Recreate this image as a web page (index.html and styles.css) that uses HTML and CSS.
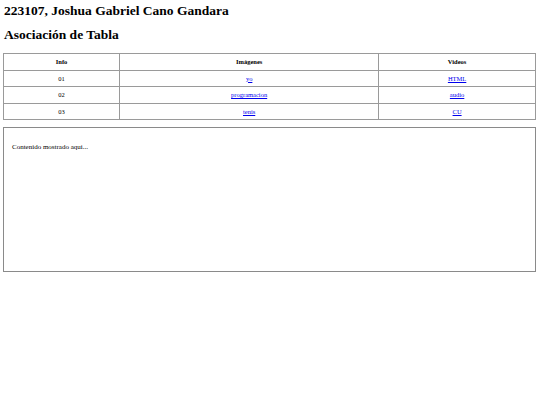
FILE: index.html
```html
<!DOCTYPE html>
<html lang="es">
<head>
<meta charset="utf-8">
<title>Asociación de Tabla</title>
<link rel="stylesheet" href="styles.css">
</head>
<body>
<h1 class="title">223107, Joshua Gabriel Cano Gandara</h1>
<h2 class="subtitle">Asociación de Tabla</h2>
<table class="grid">
  <thead>
    <tr><th class="c1">Info</th><th class="c2">Imágenes</th><th class="c3">Videos</th></tr>
  </thead>
  <tbody>
    <tr><td>01</td><td><a href="#">yo</a></td><td><a href="#">HTML</a></td></tr>
    <tr><td>02</td><td><a href="#">programacion</a></td><td><a href="#">audio</a></td></tr>
    <tr><td>03</td><td><a href="#">tenis</a></td><td><a href="#">CU</a></td></tr>
  </tbody>
</table>
<div class="content">Contenido mostrado aqui...</div>
</body>
</html>
```
FILE: styles.css
```css
html, body {
  background: #fff;
}
body {
  margin: 3px;
  font-family: "Liberation Serif", "Times New Roman", serif;
  color: #000;
}
.title {
  font-size: 13.5px;
  line-height: 15px;
  margin: 0 0 0 1px;
  font-weight: bold;
}
.subtitle {
  font-size: 13.5px;
  line-height: 15px;
  margin: 9px 0 0 1px;
  font-weight: bold;
}
.grid {
  width: 533px;
  margin-top: 11px;
  border-collapse: collapse;
  border: 1px solid #8a8a8a;
  font-size: 6.5px;
}
.grid th, .grid td {
  border: 1px solid #9a9a9a;
  text-align: center;
  height: 15.5px;
  padding: 0;
}
.grid th {
  font-weight: bold;
}
.c1 { width: 116px; }
.c2 { width: 260px; }
.c3 { width: 157px; }
.grid a {
  color: #0000ee;
  text-decoration: underline;
}
.content {
  margin-top: 7px;
  width: 515px;
  height: 123px;
  border: 1px solid #8a8a8a;
  padding: 12px 8px 8px 8px;
  font-size: 7px;
  line-height: 14px;
}
```
